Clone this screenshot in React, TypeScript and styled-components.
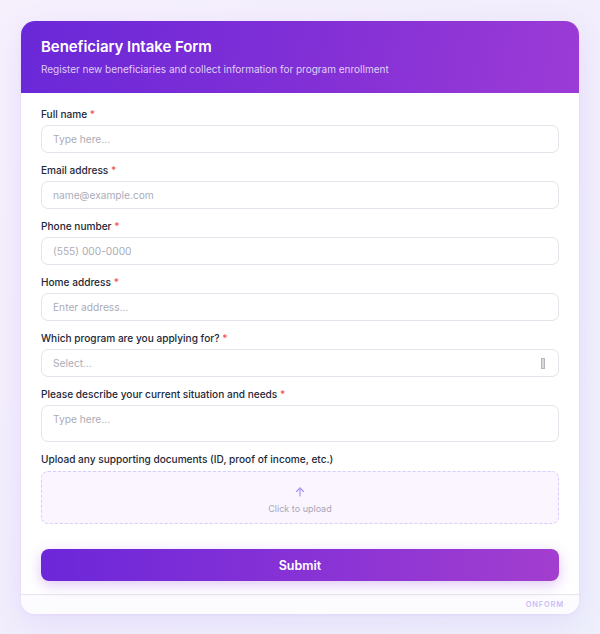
import React from 'react'
import styled, { createGlobalStyle } from 'styled-components'

const GlobalStyle = createGlobalStyle`
  * { box-sizing: border-box; }
  html, body { margin: 0; padding: 0; }
  body {
    font-family: Inter, "Noto Sans", "Liberation Sans", sans-serif;
    background: linear-gradient(135deg, #f6f0fd 0%, #f2eefc 50%, #eef0fb 100%);
    min-height: 634px;
  }
`

const Page = styled.div`
  padding: 21px 21px;
  min-height: 634px;
`

const Card = styled.div`
  width: 558px;
  background: #ffffff;
  border-radius: 14px;
  overflow: hidden;
  box-shadow: 0 8px 30px rgba(139, 92, 246, 0.12), 0 1px 3px rgba(139, 92, 246, 0.08);
`

const Header = styled.div`
  height: 72px;
  padding: 17px 20px 0;
  background: linear-gradient(100deg, #6a28d8 0%, #8330d6 55%, #9c3bd6 100%);
  color: #ffffff;
`

const Title = styled.h1`
  margin: 0;
  font-size: 15px;
  font-weight: 600;
  line-height: 18px;
  letter-spacing: -0.05px;
`

const Subtitle = styled.p`
  margin: 6px 0 0;
  font-size: 10px;
  line-height: 14px;
  color: rgba(255, 255, 255, 0.78);
`

const Body = styled.form`
  padding: 14px 20px 13px;
  display: flex;
  flex-direction: column;
`

const Field = styled.div`
  display: flex;
  flex-direction: column;
  gap: 4px;
  margin-bottom: 10px;
`

const Label = styled.label`
  font-size: 10.1px;
  font-weight: 500;
  line-height: 14px;
  color: #232838;
`

const Req = styled.span`
  color: #f05a5a;
`

const Input = styled.div<{ $tall?: boolean }>`
  height: ${({ $tall }) => ($tall ? '37px' : '28px')};
  border: 1.5px solid #e4e2ea;
  border-radius: 7px;
  padding: ${({ $tall }) => ($tall ? '7px 11px' : '0 11px')};
  display: flex;
  align-items: ${({ $tall }) => ($tall ? 'flex-start' : 'center')};
  justify-content: space-between;
  font-size: 10.2px;
  color: #acacb7;
  background: #ffffff;
`

const Tofu = styled.span`
  width: 4px;
  height: 11px;
  border: 1px solid #b5b5bd;
  background: #d8d8de;
  margin-right: 2px;
`

const Dropzone = styled.div`
  height: 53px;
  border: 1.5px dashed #d9ccfb;
  border-radius: 7px;
  background: #faf5fe;
  display: flex;
  flex-direction: column;
  align-items: center;
  justify-content: center;
  gap: 5px;
  margin-top: 1px;
  padding-top: 5px;
`

const DropText = styled.span`
  font-size: 9px;
  color: #a9a5b8;
`

const SubmitButton = styled.button`
  margin-top: 15px;
  height: 32px;
  border: none;
  border-radius: 8px;
  background: linear-gradient(90deg, #6c27d9 0%, #8a33d5 55%, #a23ecf 100%);
  color: #ffffff;
  font-family: inherit;
  font-size: 12.5px;
  font-weight: 600;
  box-shadow: 0 4px 14px rgba(139, 62, 226, 0.28);
  cursor: pointer;
`

const Footer = styled.div`
  height: 20px;
  border-top: 1px solid #e8e4ee;
  background: #fcfbfe;
  display: flex;
  align-items: center;
  justify-content: flex-end;
  padding: 0 15px;
`

const Brand = styled.span`
  font-size: 7.5px;
  font-weight: 600;
  letter-spacing: 0.8px;
  color: #cbbdf8;
`

const fields = [
  { label: 'Full name', placeholder: 'Type here...' },
  { label: 'Email address', placeholder: 'name@example.com' },
  { label: 'Phone number', placeholder: '(555) 000-0000' },
  { label: 'Home address', placeholder: 'Enter address...' },
]

export default function App() {
  return (
    <>
      <GlobalStyle />
      <Page>
        <Card>
          <Header>
            <Title>Beneficiary Intake Form</Title>
            <Subtitle>Register new beneficiaries and collect information for program enrollment</Subtitle>
          </Header>
          <Body onSubmit={e => e.preventDefault()}>
            {fields.map(f => (
              <Field key={f.label}>
                <Label>
                  {f.label} <Req>*</Req>
                </Label>
                <Input>{f.placeholder}</Input>
              </Field>
            ))}
            <Field>
              <Label>
                Which program are you applying for? <Req>*</Req>
              </Label>
              <Input>
                <span>Select...</span>
                <Tofu />
              </Input>
            </Field>
            <Field>
              <Label>
                Please describe your current situation and needs <Req>*</Req>
              </Label>
              <Input $tall>Type here...</Input>
            </Field>
            <Field>
              <Label>Upload any supporting documents (ID, proof of income, etc.)</Label>
              <Dropzone>
                <svg width="12" height="12" viewBox="0 0 24 24" fill="none" stroke="#a78bfa" strokeWidth="2.2" strokeLinecap="round" strokeLinejoin="round">
                  <path d="M12 20V4" />
                  <path d="M5 11l7-7 7 7" />
                </svg>
                <DropText>Click to upload</DropText>
              </Dropzone>
            </Field>
            <SubmitButton type="submit">Submit</SubmitButton>
          </Body>
          <Footer>
            <Brand>ONFORM</Brand>
          </Footer>
        </Card>
      </Page>
    </>
  )
}
